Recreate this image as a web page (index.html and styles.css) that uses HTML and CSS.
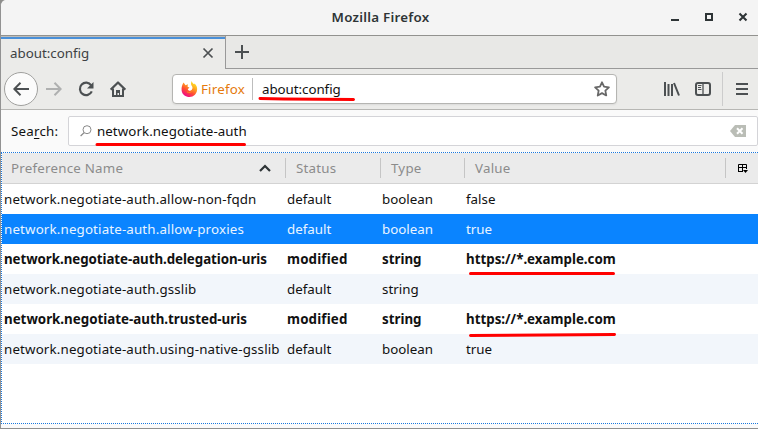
FILE: index.html
```html
<!DOCTYPE html>
<html lang="en">
<head>
<meta charset="utf-8">
<title>about:config</title>
<link rel="stylesheet" href="styles.css">
</head>
<body>
<div class="window">
  <header class="titlebar">
    <span class="title">Mozilla Firefox</span>
    <div class="controls">
      <svg width="10" height="10" viewBox="0 0 10 10"><path d="M1 8h8" stroke="#2e3436" stroke-width="2"/></svg>
      <svg width="10" height="10" viewBox="0 0 10 10"><path d="M2 2h6v6H2z" fill="none" stroke="#2e3436" stroke-width="2"/></svg>
      <svg width="10" height="10" viewBox="0 0 10 10"><path d="M1.5 1.5l7 7m0-7l-7 7" stroke="#2e3436" stroke-width="2.1"/></svg>
    </div>
  </header>
  <nav class="tabs">
    <div class="tab"><span class="tab-name">about:config</span>
      <svg width="12" height="12" viewBox="0 0 12 12"><path d="M1.500 1.500l9 9m0-9l-9 9" stroke="#4c5052" stroke-width="1.700"/></svg>
    </div>
    <div class="newtab">
      <svg width="14" height="14" viewBox="0 0 14 14"><path d="M7 0v14M0 7h14" stroke="#4c5052" stroke-width="2"/></svg>
    </div>
  </nav>
  <div class="toolbar">
    <div class="back"><svg width="16" height="16" viewBox="0 0 16 16"><path d="M16 8H1.500M7.500 1.700L1.300 8l6.200 6.300" fill="none" stroke="#4c5052" stroke-width="2"/></svg></div>
    <svg class="forward" width="16" height="16" viewBox="0 0 16 16"><path d="M0 8h14.500M8.500 1.700L14.700 8l-6.200 6.300" fill="none" stroke="#afb0b0" stroke-width="2"/></svg>
    <svg class="reload" width="16" height="16" viewBox="0 0 16 16"><path d="M13.200 4.300A6.200 6.200 0 1 0 13.800 10.400" fill="none" stroke="#4c5052" stroke-width="2.200"/><path d="M15.500 1v6.600H9z" fill="#4c5052"/></svg>
    <svg class="home" width="16" height="16" viewBox="0 0 16 16"><path d="M.7 8.700L8 1.500l7.300 7.200" fill="none" stroke="#4c5052" stroke-width="2.200" stroke-linejoin="round"/><path d="M3 7.500V15h10V7.500" fill="none" stroke="#4c5052" stroke-width="2"/><path d="M6 9h4v6H9v-3H7.500v3H6z" fill="#4c5052"/></svg>
    <div class="url">
      <svg class="fox" width="17" height="16" viewBox="0 0 17 16">
        <defs><linearGradient id="flame" x1=".85" y1="0" x2=".25" y2="1"><stop offset="0" stop-color="#fff12f"/><stop offset=".32" stop-color="#ffb31c"/><stop offset=".64" stop-color="#ff4f32"/><stop offset="1" stop-color="#ed0095"/></linearGradient></defs>
        <path d="M2.600 1.500L4.500 4.200 7 3.200 6.500 5.500l2 1.200-1.700 1.200c.2 2 2.800 2.500 4 .8 1.300-1.800.6-3.200-.4-4.500-.7-1.200-.4-2.800.4-4.200.3 1.800 1.400 2.400 2.300 3.300l.5-.8c2 2 2.800 3.700 2.500 6.500-.5 4-3.500 7-7.500 7S1 13.200.6 9.400C.3 6.300 1.300 3.300 2.600 1.500z" fill="url(#flame)"/>
        <path d="M6 10.800c1.700 1.400 4.600.7 5.600-1.600" fill="none" stroke="#ff8a1c"/>
      </svg>
      <span class="brand">Firefox</span><span class="address">about:config</span>
      <svg class="star" width="16" height="16" viewBox="0 0 16 16"><path d="M8 1.300l2.050 4.400 4.850.6-3.550 3.350.9 4.800L8 12.100l-4.250 2.350.9-4.800L1.100 6.300l4.850-.6z" fill="none" stroke="#686868" stroke-width="1.800" stroke-linejoin="round"/></svg>
    </div>
    <svg class="library" width="16" height="16" viewBox="0 0 16 16"><path d="M1 1v14M4.500 3v12M8 3v12M10 2l5 12.500" fill="none" stroke="#4c5052" stroke-width="2"/></svg>
    <svg class="sidebar" width="16" height="16" viewBox="0 0 16 16"><rect x="1" y="2" width="14" height="12" rx="2" fill="none" stroke="#4c5052" stroke-width="2"/><path d="M8 2v12" stroke="#4c5052" stroke-width="1.300"/><path d="M3 4.500h3.500M3 6.500h3M3 8.500h3.500" stroke="#4c5052"/></svg>
    <div class="menu"><svg width="12" height="12" viewBox="0 0 12 12"><path d="M0 1h12M0 6h12M0 11h12" stroke="#4c5052" stroke-width="2"/></svg></div>
  </div>
  <div class="searchbar">
    <span class="search-label">Sea<u>r</u>ch:</span>
    <div class="search">
      <svg class="glass" width="12" height="12" viewBox="0 0 12 12"><circle cx="7" cy="4.700" r="4" fill="none" stroke="#8a8a8a"/><path d="M4 7.700L.6 11" stroke="#8a8a8a" stroke-width="1.200"/></svg>
      <span class="query">network.negotiate-auth</span>
      <svg class="clear" width="16" height="12" viewBox="0 0 16 12"><path d="M0 6l5-6h11v12H5z" fill="#babdb6"/><path d="M7 3.200l5.500 5.600m0-5.600L7 8.800" stroke="#fff" stroke-width="2"/></svg>
    </div>
  </div>
  <main class="tree">
    <div class="row head">
      <span class="pref">Preference Name<svg width="12" height="8" viewBox="0 0 12 8"><path d="M1 7l5-5 5 5" fill="none" stroke="#2e3436" stroke-width="2.200"/></svg></span><span>Status</span><span>Type</span><span>Value</span>
      <span class="picker"><svg width="11" height="11" viewBox="0 0 11 11"><path d="M1.500 8V1.500h8V6M1 4.500h9M5.500 1v7M1 8.500h5" fill="none" stroke="#000"/><path d="M6 7h5L8.500 10z"/></svg></span>
    </div>
    <div class="row"><span class="name">network.negotiate-auth.allow-non-fqdn</span><span>default</span><span>boolean</span><span>false</span></div>
    <div class="row selected"><span class="name">network.negotiate-auth.allow-proxies</span><span>default</span><span>boolean</span><span>true</span></div>
    <div class="row modified"><span class="name">network.negotiate-auth.delegation-uris</span><span class="state">modified</span><span>string</span><span>https://*.example.com</span></div>
    <div class="row alt"><span class="name">network.negotiate-auth.gsslib</span><span>default</span><span>string</span><span></span></div>
    <div class="row modified"><span>network.negotiate-auth.trusted-uris</span><span class="state">modified</span><span>string</span><span>https://*.example.com</span></div>
    <div class="row alt"><span class="name">network.negotiate-auth.using-native-gsslib</span><span>default</span><span>boolean</span><span>true</span></div>
  </main>
</div>
<svg class="marks" width="758" height="429" viewBox="0 0 758 429"><path d="M260 98.500L284 99l69.500.6M97 144.500h147.500M470.500 273.500h143M470.500 335.500l144-1"/></svg>
</body>
</html>
```
FILE: styles.css
```css
* { box-sizing: border-box; }
body { margin: 0; width: 758px; height: 429px; overflow: hidden; background: #8e8e8c; font: 13.333px/20px "Noto Sans", sans-serif; color: #111; }
svg { display: block; flex: none; }
.window { width: 758px; height: 429px; display: flex; flex-direction: column; border-left: 1px solid #929292; border-bottom: 1px solid #8e8e8e; border-top-left-radius: 6px; background: #fafafa; overflow: hidden; }
.titlebar { position: relative; height: 36px; flex: none; display: flex; align-items: center; justify-content: center; background: #f4f4f4; border-bottom: 1px solid #92928f; color: #2e3436; font-weight: 600; }
.title { margin: 0 0 2px 2px; letter-spacing: .25px; }
.controls { position: absolute; right: 10px; top: 12px; display: flex; gap: 24px; }
.tabs { height: 33px; flex: none; display: flex; background: #e9e9e7; }
.tab { width: 224px; display: flex; align-items: center; justify-content: space-between; padding: 0 11px 0 9px; border-top: 1px solid #bdbdbb; box-shadow: inset 0 2px #4a90d9; background: #ebebe9; color: #3d4143; }
.newtab { flex: 1; padding: 9px 0 0 9px; border-left: 1px solid #999; border-bottom: 1px solid #999; background: #e8e8e6; }
.toolbar { height: 41px; flex: none; display: flex; align-items: center; background: #ebebe9; border-bottom: 1px solid #b7b7b4; }
.back { width: 34px; height: 34px; margin-left: 3px; border: 1px solid #a0a09e; border-radius: 50%; background: #fbfbfb; display: flex; align-items: center; justify-content: center; }
.forward { margin-left: 8px; }
.reload { margin-left: 16px; }
.home { margin-left: 16px; }
.url { width: 445px; height: 30px; margin-left: 46px; border: 1px solid #b5b5b2; border-radius: 4px; background: #fff; display: flex; align-items: center; padding: 0 6px 0 8px; box-shadow: 0 1px 2px #0001; }
.brand { width: 52px; margin-left: 3px; height: 22px; line-height: 22px; letter-spacing: .2px; border-right: 1px solid #bdbdbd; color: #e57a0c; }
.address { margin-left: 9px; letter-spacing: -.05px; }
.star { margin-left: auto; }
.library { margin-left: 47px; }
.sidebar { margin-left: 15px; }
.menu { height: 34px; margin-left: 11px; padding: 11px 0 0 13px; border-left: 1px solid #ccc; }
.searchbar { height: 42px; flex: none; display: flex; align-items: center; padding-left: 10px; }
.search-label { width: 57px; letter-spacing: .2px; }
.search-label u { text-underline-offset: 2px; }
.search { width: 690px; height: 30px; flex: none; display: flex; align-items: center; border: 1px solid #d4d4d8; border-radius: 2px; background: #fff; padding: 0 11px; }
.query { margin-left: 5px; letter-spacing: .06px; }
.clear { margin-left: auto; }
.tree { height: 272px; flex: none; border: 1px dotted #1a78dd; border-right: 0; background: #fff; }
.row { height: 30px; display: grid; grid-template-columns: 283px 95px 84px 1fr; align-items: center; padding-left: 2px; white-space: nowrap; }
.head { height: 31px; grid-template-columns: 274px 95px 84px 1fr 33px; padding-left: 9px; background: #ebebeb; border-bottom: 1px solid #d3d3d3; color: #8b8b8b; letter-spacing: .22px; }
.head > span + span { border-left: 1px solid #c5c5c5; padding-left: 10px; }
.pref { display: flex; align-items: center; justify-content: space-between; padding-right: 14px; }
.head .picker { height: 20px; padding: 5px 0 0 11px; }
.name { letter-spacing: .15px; }
.alt { background: #f2f6fb; }
.selected { background: #0a84ff; color: #e9f4ff; }
.modified { font-weight: 700; }
.modified .name { letter-spacing: -.06px; }
.state { letter-spacing: .15px; }
.marks { position: absolute; left: 0; top: 0; fill: none; stroke: #f00; stroke-width: 3; stroke-linecap: round; pointer-events: none; }
```
